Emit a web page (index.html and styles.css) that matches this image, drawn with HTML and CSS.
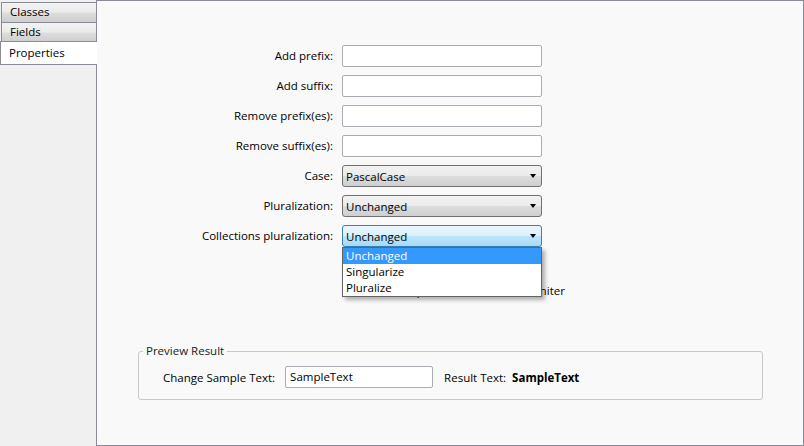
FILE: index.html
```html
<!DOCTYPE html>
<html>
<head>
<meta charset="utf-8">
<link rel="stylesheet" href="styles.css">
</head>
<body>
<div class="tabs">
  <div class="tab">Classes</div>
  <div class="tab">Fields</div>
  <div class="tab selected">Properties</div>
</div>
<div class="panel">
  <div class="form">
    <label class="lbl">Add prefix:</label><div class="textbox"></div>
    <label class="lbl">Add suffix:</label><div class="textbox"></div>
    <label class="lbl">Remove prefix(es):</label><div class="textbox"></div>
    <label class="lbl">Remove suffix(es):</label><div class="textbox"></div>
    <label class="lbl">Case:</label><div class="combo"><span>PascalCase</span><i class="arrow"></i></div>
    <label class="lbl">Pluralization:</label><div class="combo"><span>Unchanged</span><i class="arrow"></i></div>
    <label class="lbl">Collections pluralization:</label>
    <div class="combo-wrap">
      <div class="combo open"><span>Unchanged</span><i class="arrow"></i></div>
      <ul class="droplist">
        <li class="hl">Unchanged</li>
        <li>Singularize</li>
        <li>Pluralize</li>
      </ul>
    </div>
    <div></div>
    <div class="check-row"><span class="checkbox"></span><span>Separate words with delimiter</span></div>
  </div>
  <div class="group">
    <span class="legend">Preview Result</span>
    <div class="preview-row">
      <span class="plabel">Change Sample Text:</span>
      <div class="textbox sample">SampleText</div>
      <span class="rlabel">Result Text:</span>
      <b class="result">SampleText</b>
    </div>
  </div>
</div>
</body>
</html>
```
FILE: styles.css
```css
html, body {
  margin: 0;
  padding: 0;
}
body {
  width: 804px;
  height: 446px;
  background: #f0f0f0;
  display: flex;
  font-family: "Open Sans", "Noto Sans", sans-serif;
  font-size: 11.5px;
  color: #000;
  overflow: hidden;
}
.tabs {
  width: 96px;
  padding-top: 2px;
  display: flex;
  flex-direction: column;
  flex-shrink: 0;
}
.tab {
  height: 20px;
  margin-left: 1px;
  border: 1px solid #898c95;
  border-right: none;
  border-bottom: none;
  background: linear-gradient(#f3f3f3 0%, #ebebeb 45%, #dddddd 55%, #cdcdcd 100%);
  padding-left: 8px;
  line-height: 18px;
  box-sizing: border-box;
}
.tab.selected {
  margin-left: 0;
  margin-right: -1px;
  height: 24px;
  margin-top: -1px;
  background: #ffffff;
  border-bottom: 1px solid #898c95;
  line-height: 22px;
  position: relative;
  z-index: 2;
  padding-left: 8px;
}
.panel {
  flex: 1;
  height: 446px;
  box-sizing: border-box;
  border: 1px solid #898c95;
  background: #f9f9f9;
  padding-top: 44px;
}
.form {
  display: grid;
  grid-template-columns: 180px 200px;
  grid-template-rows: repeat(7, 22px) auto;
  column-gap: 9px;
  row-gap: 8px;
  margin-left: 56px;
}
.lbl {
  text-align: right;
  line-height: 22px;
  white-space: nowrap;
}
.textbox {
  border: 1px solid #abadb3;
  border-radius: 2px;
  background: #fff;
  box-sizing: border-box;
  height: 22px;
  padding-left: 4px;
  line-height: 19px;
}
.combo {
  height: 22px;
  box-sizing: border-box;
  border: 1px solid #707070;
  border-radius: 3px;
  background: linear-gradient(#f2f2f2 0%, #ebebeb 50%, #dddddd 50%, #cfcfcf 100%);
  display: flex;
  align-items: center;
  justify-content: space-between;
  padding: 0 4px 0 3px;
  line-height: 19px;
}
.combo.open {
  border-color: #3c7fb1;
  background: linear-gradient(#eaf6fd 0%, #d9f0fc 50%, #bee6fd 50%, #a7d9f5 100%);
}
.arrow {
  width: 0;
  height: 0;
  border-left: 3.5px solid transparent;
  border-right: 3.5px solid transparent;
  border-top: 4px solid #000;
  margin-right: 1px;
}
.combo-wrap {
  position: relative;
}
.droplist {
  position: absolute;
  left: 0;
  top: 22px;
  width: 200px;
  box-sizing: border-box;
  margin: 0;
  padding: 0;
  list-style: none;
  background: #fff;
  border: 1px solid #646464;
  box-shadow: 3px 3px 4px rgba(0, 0, 0, 0.3);
  z-index: 5;
}
.droplist li {
  height: 16px;
  line-height: 16px;
  padding-left: 3px;
}
.droplist li.hl {
  background: #3399ff;
  color: #fff;
}
.check-row {
  margin-top: 27px;
  display: flex;
  align-items: center;
  gap: 6px;
  white-space: nowrap;
  height: 16px;
  margin-left: 54px;
}
.checkbox {
  width: 13px;
  height: 13px;
  box-sizing: border-box;
  border: 1px solid #8e8f8f;
  background: #f4f4f4;
}
.group {
  position: relative;
  margin: 53px 40px 0 41px;
  border: 1px solid #c8c8c8;
  border-radius: 3px;
  padding: 14px 0 0 24px;
  height: 49px;
  box-sizing: border-box;
}
.legend {
  position: absolute;
  left: 4px;
  top: -8px;
  padding: 0 3px;
  background: #f9f9f9;
  color: #222;
  line-height: 14px;
}
.preview-row {
  display: flex;
  align-items: center;
}
.plabel {
  white-space: nowrap;
}
.sample {
  width: 148px;
  margin-left: 10px;
  flex-shrink: 0;
}
.rlabel {
  margin-left: 11px;
}
.result {
  margin-left: 6px;
}
```
